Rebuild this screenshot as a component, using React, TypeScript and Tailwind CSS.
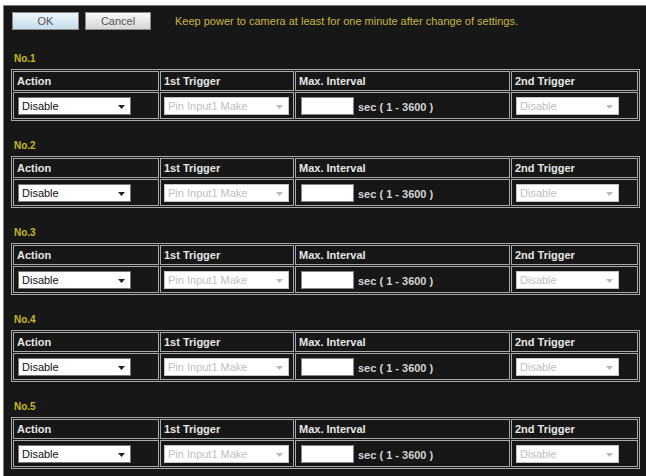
import React from 'react'

const font = { fontFamily: '"Liberation Sans", Arial, sans-serif' }

function Arrow({ disabled }: { disabled?: boolean }) {
  return (
    <svg width="7" height="4" viewBox="0 0 7 4" className="absolute right-[5px] top-[7px]">
      <path d="M0 0 L7 0 L3.5 4 Z" fill={disabled ? '#b8b8b8' : '#222222'} />
    </svg>
  )
}

function FakeSelect({ value, width, disabled }: { value: string; width: string; disabled?: boolean }) {
  return (
    <div
      className={`relative h-[18px] ${width} bg-white border ${
        disabled ? 'border-[#c4c4c4] text-[#c0c0c0]' : 'border-[#777] text-[#111]'
      } pl-[3px] text-[11px] leading-[16px]`}
    >
      {value}
      <Arrow disabled={disabled} />
    </div>
  )
}

function RuleTable({ n }: { n: number }) {
  const head = 'h-[20px] border border-[#a9a9a9] flex items-center pl-[3px] text-[11px] font-bold text-[#e6e6e6]'
  const cell = 'h-[27px] border border-[#a9a9a9] flex items-center'
  return (
    <div>
      <div className="h-[13px] leading-[13px] ml-[3px] text-[10px] font-bold text-[#c9b824]">No.{n}</div>
      <div className="mt-[4px] w-[629px] border border-[#a9a9a9] p-[1px] grid grid-cols-[146px_134px_215px_127px] gap-[1px]">
        <div className={head}>Action</div>
        <div className={head}>1st Trigger</div>
        <div className={head}>Max. Interval</div>
        <div className={head}>2nd Trigger</div>

        <div className={`${cell} pl-[4px]`}>
          <FakeSelect value="Disable" width="w-[113px]" />
        </div>
        <div className={`${cell} pl-[3px]`}>
          <FakeSelect value="Pin Input1 Make" width="w-[125px]" disabled />
        </div>
        <div className={`${cell} pl-[5px]`}>
          <div className="h-[18px] w-[53px] bg-white border border-[#888]" />
          <span className="ml-[4px] mt-[3px] text-[11px] font-bold text-[#d4d4d4]">sec ( 1 - 3600 )</span>
        </div>
        <div className={`${cell} pl-[4px]`}>
          <FakeSelect value="Disable" width="w-[103px]" disabled />
        </div>
      </div>
    </div>
  )
}

export default function App() {
  return (
    <div className="w-[646px] h-[476px] bg-white overflow-hidden" style={font}>
      <div className="ml-[3px] mt-[5px] h-[471px] bg-[#171717] border-l border-t border-[#7c7c7c] px-[7px] pt-[6px]">
        <div className="flex items-center h-[18px]">
          <button className="ml-[1px] w-[67px] h-[18px] border border-[#8a8a8a] bg-gradient-to-b from-[#eef6fc] to-[#c6dbea] text-[11px] text-[#555]">
            OK
          </button>
          <button className="ml-[6px] w-[66px] h-[18px] border border-[#8a8a8a] bg-gradient-to-b from-[#fafafa] to-[#d6d6d6] text-[11px] text-[#555]">
            Cancel
          </button>
          <span className="ml-[24px] text-[11px] text-[#c7b545]">
            Keep power to camera at least for one minute after change of settings.
          </span>
        </div>

        <div className="mt-[22px] flex flex-col gap-[18px]">
          {[1, 2, 3, 4, 5].map((n) => (
            <RuleTable key={n} n={n} />
          ))}
        </div>
      </div>
    </div>
  )
}
